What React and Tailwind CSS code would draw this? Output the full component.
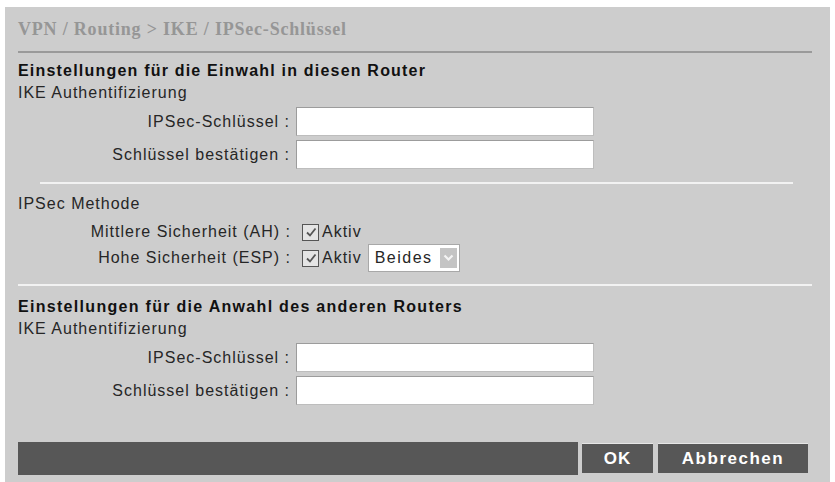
import React from 'react';

const Field = ({ label }) => (
    <div className="flex items-center h-[29px]">
        <div className="w-[273px] text-right pr-[1px] whitespace-nowrap">{label}</div>
        <div className="ml-[5px] w-[298px] h-[29px] bg-white border border-[#9c9c9c] border-r-[#bdbdbd] border-b-[#bdbdbd]" />
    </div>
);

const CheckBox = () => (
    <span className="inline-flex w-[17px] h-[17px] border border-[#555] bg-[#e4e4e4] items-center justify-center">
        <svg width="12" height="12" viewBox="0 0 12 12">
            <path d="M2 6.5 L5 9.5 L10.5 2.5" fill="none" stroke="#555" strokeWidth="1.8" />
        </svg>
    </span>
);

const Separator = ({ className }) => <div className={`h-[2px] bg-[#f2f2f2] ${className}`} />;

const App = () => {
    return (
        <div className="w-[835px] h-[482px] bg-white pt-[7px] px-[5px] text-[16px] tracking-[1px] text-[#262626]" style={{ fontFamily: '"Liberation Sans", Arial, sans-serif' }}>
            <div className="h-[475px] bg-[#cdcdcd] pl-[13px] pr-[18px] flex flex-col">
                <div className="h-[44px] flex items-center text-[18px] font-bold tracking-[0.8px] text-[#969696]" style={{ fontFamily: '"Liberation Serif", "Times New Roman", serif' }}>
                    VPN / Routing &gt; IKE / IPSec-Schlüssel
                </div>
                <div className="h-[2px] bg-[#9a9a9a]" />

                <div className="mt-[8px] h-[20px] leading-[20px] font-bold tracking-[1.2px] text-[#111]">
                    Einstellungen für die Einwahl in diesen Router
                </div>
                <div className="mt-[2px] h-[20px] leading-[20px]">IKE Authentifizierung</div>
                <div className="mt-[4px] flex flex-col gap-[4px]">
                    <Field label="IPSec-Schlüssel :" />
                    <Field label="Schlüssel bestätigen :" />
                </div>

                <Separator className="mt-[13px] ml-[22px] mr-[19px]" />

                <div className="mt-[10px] h-[20px] leading-[20px]">IPSec Methode</div>
                <div className="mt-[6px] h-[24px] flex items-center">
                    <div className="w-[273px] text-right whitespace-nowrap">Mittlere Sicherheit (AH) :</div>
                    <div className="ml-[11px] flex items-center gap-[3px]">
                        <CheckBox />
                        <span>Aktiv</span>
                    </div>
                </div>
                <div className="h-[28px] flex items-center">
                    <div className="w-[273px] text-right whitespace-nowrap">Hohe Sicherheit (ESP) :</div>
                    <div className="ml-[11px] flex items-center gap-[3px]">
                        <CheckBox />
                        <span>Aktiv</span>
                    </div>
                    <div className="ml-[6px] w-[92px] h-[28px] bg-white border border-[#a8a8a8] flex items-center justify-between pl-[6px] pr-[2px]">
                        <span className="tracking-[1.5px]">Beides</span>
                        <span className="w-[17px] h-[20px] bg-[#c4c4c4] flex items-center justify-center">
                            <svg width="11" height="8" viewBox="0 0 11 8">
                                <path d="M1.5 1.5 L5.5 5.5 L9.5 1.5" fill="none" stroke="#f4f4f4" strokeWidth="2.2" />
                            </svg>
                        </span>
                    </div>
                </div>

                <Separator className="mt-[12px]" />

                <div className="mt-[11px] h-[20px] leading-[20px] font-bold tracking-[1.3px] text-[#111]">
                    Einstellungen für die Anwahl des anderen Routers
                </div>
                <div className="mt-[2px] h-[20px] leading-[20px]">IKE Authentifizierung</div>
                <div className="mt-[4px] flex flex-col gap-[4px]">
                    <Field label="IPSec-Schlüssel :" />
                    <Field label="Schlüssel bestätigen :" />
                </div>

                <div className="mt-[37px] h-[33px] flex">
                    <div className="flex-1 bg-[#575757]" />
                    <div className="ml-[4px] w-[71px] mt-[1px] mb-[2px] bg-[#575757] border-t border-[#e6e6e6] flex items-center justify-center text-white text-[17px] font-bold tracking-[1px]">
                        OK
                    </div>
                    <div className="ml-[5px] w-[150px] mt-[1px] mb-[2px] bg-[#575757] border-t border-[#e6e6e6] flex items-center justify-center text-white text-[17px] font-bold tracking-[1.5px]">
                        Abbrechen
                    </div>
                    <div className="w-[4px]" />
                </div>
            </div>
        </div>
    );
};

export default App;
